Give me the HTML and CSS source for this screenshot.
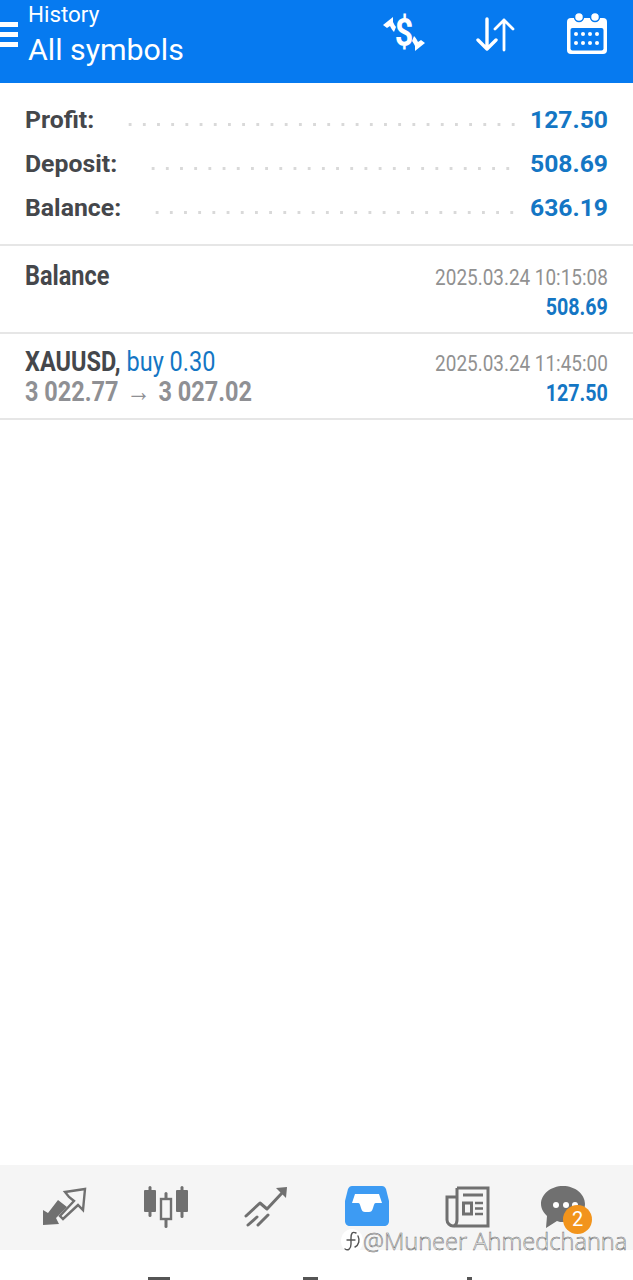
FILE: index.html
```html
<!DOCTYPE html>
<html lang="en">
<head>
  <meta charset="UTF-8" />
  <meta name="viewport" content="width=device-width, initial-scale=1.0"/>
  <title>History</title>
  <link rel="stylesheet" href="styles.css">
</head>
<body>
  <div class="pagina">
    <div class="topbar">
      <div class="menu"><span></span><span></span><span></span></div>
      <div class="titulos">
        <div class="titulo-sub">History</div>
        <div class="titulo">All symbols</div>
      </div>
      <div class="acciones">
        <!-- dollar with arrows -->
        <svg class="ico-dolar" width="44" height="44" viewBox="0 0 44 44">
          <text x="0" y="0" transform="translate(21 32) scale(0.85 1)" text-anchor="middle" class="dolar-txt">$</text>
          <path d="M0 11 L10 3 L10 8 C11 10 12 12 13 13 L11 18 C9 16 8 14 7 12 L4 14 Z" fill="#fff"/>
          <path d="M0 11 L10 3 L10 8 C11 10 12 12 13 13 L11 18 C9 16 8 14 7 12 L4 14 Z" fill="#fff" transform="rotate(180 21 20)"/>
        </svg>
        <!-- sort -->
        <svg class="ico-orden" width="40" height="36" viewBox="0 0 40 36" fill="none" stroke="#fff" stroke-width="3.4" stroke-linecap="round" stroke-linejoin="round">
          <path d="M11 2 V32 M2 23 L11 32 L20 23"/>
          <path d="M28 33 V3 M19 12 L28 3 L37 12" stroke-width="2.8"/>
        </svg>
        <!-- calendar -->
        <svg class="ico-cal" width="42" height="42" viewBox="0 0 42 42">
          <rect x="1" y="6" width="40" height="36" rx="4" fill="#fff"/>
          <rect x="4.5" y="16" width="33" height="22.5" rx="2" fill="#067af0"/>
          <circle cx="13" cy="5" r="4.5" fill="#fff" stroke="#067af0" stroke-width="1.5"/>
          <circle cx="29" cy="5" r="4.5" fill="#fff" stroke="#067af0" stroke-width="1.5"/>
          <g fill="#fff">
            <circle cx="10" cy="22" r="2"/><circle cx="17" cy="22" r="2"/><circle cx="24" cy="22" r="2"/><circle cx="31" cy="22" r="2"/>
            <circle cx="10" cy="31" r="2"/><circle cx="17" cy="31" r="2"/><circle cx="24" cy="31" r="2"/><circle cx="31" cy="31" r="2"/>
          </g>
        </svg>
      </div>
    </div>

    <div class="resumen">
      <div class="res-fila"><span class="res-label">Profit:</span><span class="puntos"></span><span class="res-valor">127.50</span></div>
      <div class="res-fila"><span class="res-label">Deposit:</span><span class="puntos"></span><span class="res-valor">508.69</span></div>
      <div class="res-fila"><span class="res-label">Balance:</span><span class="puntos"></span><span class="res-valor">636.19</span></div>
    </div>

    <div class="operacion op-saldo">
      <div class="op-izq">
        <div class="op-nombre">Balance</div>
      </div>
      <div class="op-der">
        <div class="op-fecha">2025.03.24 10:15:08</div>
        <div class="op-monto">508.69</div>
      </div>
    </div>

    <div class="operacion">
      <div class="op-izq">
        <div class="op-nombre">XAUUSD, <span class="op-tipo">buy 0.30</span></div>
        <div class="op-precio">3 022.77<span class="flecha">→</span>3 027.02</div>
      </div>
      <div class="op-der">
        <div class="op-fecha">2025.03.24 11:45:00</div>
        <div class="op-monto">127.50</div>
      </div>
    </div>

    <div class="vacio"></div>

    <div class="tabs">
      <svg width="46" height="42" viewBox="0 0 46 42">
        <path d="M2 39 L2 24 L7 27 L17 14 L26 21 L15 32 L18 38 Z" fill="#707070"/>
        <path d="M24 6 L44 3 L42 24 L37 19 L22 33 L19 30 L33 15 L28 11 Z" fill="none" stroke="#707070" stroke-width="2.4"/>
      </svg>
      <svg width="46" height="42" viewBox="0 0 46 42">
        <g fill="#707070">
          <rect x="6.5" y="0" width="3" height="31" rx="1.5"/><rect x="2" y="4" width="12" height="22" rx="1"/>
          <rect x="38.5" y="0" width="3" height="32" rx="1.5"/><rect x="34" y="4" width="12" height="22" rx="1"/>
          <rect x="22.5" y="6" width="3" height="36" rx="1.5"/>
        </g>
        <rect x="19" y="13" width="10" height="20" fill="#f5f5f5" stroke="#707070" stroke-width="2.4"/>
      </svg>
      <svg width="46" height="42" viewBox="0 0 46 42" fill="none" stroke="#707070" stroke-width="3" stroke-linecap="round" stroke-linejoin="round">
        <path d="M3 30 L17 17 L24 23 L39 7"/>
        <path d="M33 2 L44 1 L43 12 Z" fill="#707070" stroke="none"/>
        <path d="M5 39 L14 31 M15 39 L25 29"/>
      </svg>
      <svg width="44" height="40" viewBox="0 0 44 40">
        <path d="M7 0 H37 C39 0 40 1 41 3 L44 15 V35 C44 38 42 40 39 40 H5 C2 40 0 38 0 35 V15 L3 3 C4 1 5 0 7 0 Z" fill="#3d9bf3"/>
        <path d="M10 8 H34 L37 17 H31 C29 17 29 19 28 22 C27 25 26 26 24 26 H20 C18 26 17 25 16 22 C15 19 15 17 13 17 H7 Z" fill="#fff"/>
      </svg>
      <svg width="46" height="42" viewBox="0 0 46 42" fill="none" stroke="#707070">
        <path d="M12 2 H43 V40 H8 C5 40 2 37 2 34 V11 H11" stroke-width="3"/>
        <path d="M12 2 V34 C12 37 11 39 9 40" stroke-width="3"/>
        <path d="M18 9 H38" stroke-width="3"/>
        <rect x="18.5" y="17" width="8" height="11" stroke-width="3"/>
        <path d="M30 17 H38 M30 22.5 H38 M30 28 H38" stroke-width="2.6"/>
      </svg>
      <div class="chat">
        <svg width="44" height="42" viewBox="0 0 44 42">
          <path d="M22 0 C10 0 0 8 0 18 C0 23 3 27 6 30 L5 42 L16 35 C18 36 20 36 22 36 C34 36 44 28 44 18 C44 8 34 0 22 0 Z" fill="#707070"/>
          <circle cx="15" cy="19" r="3" fill="#fff"/><circle cx="25" cy="19" r="3" fill="#fff"/><circle cx="34" cy="19" r="3" fill="#fff"/>
        </svg>
        <span class="badge">2</span>
      </div>
    </div>

    <div class="pie">
      <span class="marca">
        <svg class="marca-logo" width="22" height="24" viewBox="0 0 22 24" fill="none" stroke="#555" stroke-width="1.4" stroke-linecap="round"><path d="M15 4 C11 2 10 5 10 9 V15 C10 20 7 22 4 20"/><path d="M6 11 H14"/><path d="M17 7 C19 11 18 16 14 18"/></svg>@Muneer Ahmedchanna
      </span>
      <span class="corte corte-a"></span>
      <span class="corte corte-b"></span>
      <span class="corte corte-c"></span>
    </div>
  </div>
</body>
</html>
```

FILE: styles.css
```css
* {
  box-sizing: border-box;
}
html, body {
  margin: 0;
  padding: 0;
  background: #fff;
  overflow: hidden;
}
.pagina {
  width: 633px;
  height: 1280px;
  display: flex;
  flex-direction: column;
  font-family: Roboto, sans-serif;
  overflow: hidden;
}

/* barra superior */
.topbar {
  height: 83px;
  flex: none;
  background: #067af0;
  color: #fff;
  display: flex;
  align-items: flex-start;
}
.menu {
  width: 18px;
  margin-top: 22px;
  margin-right: 10px;
  display: flex;
  flex-direction: column;
  gap: 5px;
}
.menu span {
  display: block;
  height: 5px;
  background: #fff;
}
.titulos {
  flex: 1;
}
.titulo-sub {
  font-size: 22.4px;
  line-height: 24px;
  margin-top: 2px;
}
.titulo {
  font-size: 30.3px;
  line-height: 34px;
  margin-top: 7px;
}
.acciones {
  display: flex;
  align-items: flex-start;
  gap: 46px;
  padding: 12px 25px 0 0;
}
.ico-dolar {
  margin-top: 2px;
  overflow: visible;
}
.ico-orden {
  margin-top: 5px;
  margin-left: 3px;
  margin-right: 4px;
}
.dolar-txt {
  font-family: Roboto, sans-serif;
  font-size: 38px;
  font-weight: 700;
  fill: #fff;
}

/* resumen */
.resumen {
  flex: none;
  height: 163px;
  padding: 14px 25px 0;
  border-bottom: 2px solid #e6e6e6;
}
.res-fila {
  height: 44px;
  display: flex;
  align-items: center;
}
.res-label {
  font-size: 24.8px;
  font-weight: 700;
  color: #45474b;
}
.res-valor {
  font-size: 24.7px;
  font-weight: 700;
  color: #1476c4;
}
.puntos {
  flex: 1;
  height: 3px;
  margin: 10px 12px 0 29px;
  background-image: radial-gradient(circle, #d9d9d9 1.4px, transparent 1.6px);
  background-size: 14.2px 3px;
  background-repeat: repeat-x;
}

/* operaciones */
.operacion {
  flex: none;
  height: 86px;
  padding: 11px 25px 0;
  border-bottom: 2px solid #e6e6e6;
  display: flex;
  justify-content: space-between;
}
.op-saldo {
  height: 88px;
  padding-top: 13px;
}
.op-nombre {
  font-size: 27px;
  line-height: 35px;
  font-weight: 700;
  color: #45474b;
  transform: scaleX(0.87);
  transform-origin: left;
  white-space: nowrap;
}
.op-tipo {
  font-weight: 400;
  color: #1476c4;
}
.op-precio {
  font-size: 27px;
  line-height: 25px;
  font-weight: 700;
  color: #8f9094;
  transform: scaleX(0.87);
  transform-origin: left;
  white-space: nowrap;
}
.flecha {
  font-size: 28px;
  line-height: 20px;
  margin: 0 9px 0 9px;
}
.op-der {
  text-align: right;
  padding-top: 6px;
}
.op-fecha {
  font-size: 22px;
  line-height: 26px;
  color: #919191;
  transform: scaleX(0.86);
  transform-origin: right;
  white-space: nowrap;
}
.op-monto {
  font-size: 24px;
  line-height: 26px;
  margin-top: 3px;
  font-weight: 700;
  color: #1476c4;
  transform: scaleX(0.82);
  transform-origin: right;
}

.vacio {
  flex: 1;
}

/* barra inferior */
.tabs {
  flex: none;
  height: 85px;
  background: #f5f5f5;
  display: grid;
  grid-template-columns: repeat(6, 101px);
  justify-items: center;
  align-items: start;
  padding: 21px 0 0 13px;
}
.chat {
  position: relative;
  width: 51px;
  height: 42px;
  margin-right: 4px;
}
.badge {
  position: absolute;
  right: 0;
  top: 19px;
  width: 29px;
  height: 29px;
  border-radius: 50%;
  background: #f2941c;
  color: #fff;
  font-size: 20px;
  line-height: 29px;
  text-align: center;
}

/* marca de agua */
.pie {
  flex: none;
  height: 30px;
  position: relative;
}
.marca {
  position: absolute;
  left: 341px;
  top: -24px;
  display: flex;
  align-items: center;
  font-family: "Open Sans", sans-serif;
  font-size: 23.6px;
  font-weight: 300;
  line-height: 30px;
  color: #fff;
  white-space: nowrap;
  -webkit-text-stroke: 0.5px #666;
}
.marca-logo {
  background: #fff;
  border-radius: 50%;
}

/* restos de texto cortado abajo */
.corte {
  position: absolute;
  top: 27px;
  height: 3px;
  background: #555;
}
.corte-a {
  left: 148px;
  width: 22px;
}
.corte-b {
  left: 303px;
  width: 15px;
}
.corte-c {
  left: 467px;
  width: 5px;
}
```
